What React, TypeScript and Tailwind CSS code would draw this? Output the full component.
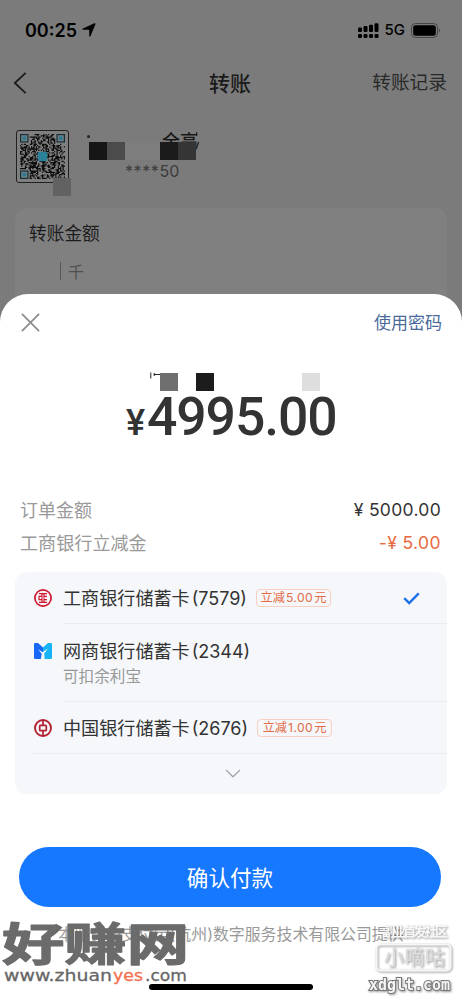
import React from "react";

type BankCard = {
  id: string;
  name: string;
  tail: string;
  discount?: string;
  note?: string;
  selected?: boolean;
  icon: React.ReactNode;
};

function IcbcIcon() {
  return (
    <svg viewBox="0 0 18 18" className="h-[18px] w-[18px]" fill="none" stroke="#cf1930">
      <circle cx="9" cy="9" r="8.1" strokeWidth="1.7" />
      <path d="M5 4.7h8M5 13.3h8" strokeWidth="1.3" />
      <path d="M8 4.7v2.6H5v3.4h3v2.6M10 4.7v2.6h3M10 13.3v-2.6h3M7 9h4" strokeWidth="1.2" />
    </svg>
  );
}

function MybankIcon() {
  return (
    <svg viewBox="0 0 18 16" className="h-4 w-[18px]">
      <path d="M1.2 0H4l5 4.4V16H1.2Q0 16 0 14.8V1.2Q0 0 1.2 0z" fill="#1768f5" />
      <path d="M16.8 0H14L9 4.4V16h7.8q1.2 0 1.2-1.2V1.2Q18 0 16.8 0z" fill="#16b4f7" />
      <path d="M4.2 6.2l4.4 3L13.8 5.6l-3.6 5.2.4 5.2H6.8l1-5z" fill="#f5f7fa" />
    </svg>
  );
}

function BocIcon() {
  return (
    <svg viewBox="0 0 18 18" className="h-[18px] w-[18px]" fill="none" stroke="#b4202f">
      <circle cx="9" cy="9" r="8" strokeWidth="1.9" />
      <rect x="5.7" y="6.3" width="6.6" height="5.4" rx="0.8" strokeWidth="1.7" />
      <path d="M9 1v5.3M9 11.7V17" strokeWidth="1.7" />
    </svg>
  );
}

const cards: BankCard[] = [
  { id: "icbc", name: "工商银行储蓄卡", tail: "(7579)", discount: "5.00", selected: true, icon: <IcbcIcon /> },
  { id: "mybank", name: "网商银行储蓄卡", tail: "(2344)", note: "可扣余利宝", icon: <MybankIcon /> },
  { id: "boc", name: "中国银行储蓄卡", tail: "(2676)", discount: "1.00", icon: <BocIcon /> },
];

// module grid for the receive code, finder corners are left empty
const SIZE = 37;
const modules: string[] = [];
let seed = 20;
for (let y = 0; y < SIZE; y++) {
  for (let x = 0; x < SIZE; x++) {
    seed = (seed * 1103515245 + 12345) % 2147483648;
    const corner = (x < 8 && y < 8) || (x > SIZE - 9 && y < 8) || (x < 8 && y > SIZE - 9);
    if (!corner && (seed >> 12) % 100 < 54) modules.push(`M${x} ${y}h1v1h-1z`);
  }
}

function QrCode() {
  return (
    <div className="h-[53px] w-[53px] rounded-[3px] border border-[#202020] bg-[#7f7f7f] p-[3px]">
      <svg viewBox="0 0 37 37" className="h-full w-full">
        <path d={modules.join("")} fill="#0d0d0d" />
        {[[0, 0], [30, 0], [0, 30]].map(([x, y]) => (
          <g key={`${x}-${y}`}>
            <rect x={x + 0.5} y={y + 0.5} width="6" height="6" fill="none" stroke="#12303b" />
            <rect x={x + 2} y={y + 2} width="3" height="3" fill="#287a93" />
          </g>
        ))}
        <rect x="14.5" y="14.5" width="8" height="8" rx="2" fill="#2b8198" />
      </svg>
    </div>
  );
}

function StatusBar() {
  return (
    <div className="flex h-[60px] items-center justify-between pr-[21px] pl-[25px] text-black">
      <div className="flex items-center gap-[5px]">
        <span className="text-[18px] font-semibold">00:25</span>
        <svg viewBox="0 0 14 14" className="h-[14px] w-[14px]">
          <path d="M12.4.3q1.5-.4 1 1L8.5 13.1q-.8 1.2-1.3-.2V7.3q0-.5-.5-.5H1.1q-1.5-.4-.2-1.3z" />
        </svg>
      </div>
      <div className="flex items-center">
        <svg viewBox="0 0 21 15" className="h-[15px] w-[21px]">
          {[0, 1, 2, 3].map((i) => (
            <g key={i}>
              <rect x={i * 5.5} y={4.5 - i * 1.4} width="4" height={4.5 + i * 1.4} rx="1.2" />
              <rect x={i * 5.5} y="11" width="4" height="4" rx="1.2" />
            </g>
          ))}
        </svg>
        <span className="ml-[6px] text-[15px] font-medium">5G</span>
        <svg viewBox="0 0 30 15" className="ml-[6px] h-[15px] w-[30px]">
          <rect x="0.5" y="0.5" width="26" height="14" rx="4" fill="none" stroke="#474747" />
          <rect x="2.2" y="2.2" width="22.6" height="10.6" rx="2.5" />
          <path d="M28 5.3q2 2.2 0 4.4z" fill="#474747" />
        </svg>
      </div>
    </div>
  );
}

function TransferPage() {
  return (
    <div className="flex h-[340px] flex-col">
      <StatusBar />
      <div className="grid h-[46px] grid-cols-3 items-center pr-[15px] pl-[13px] text-[#1b1b1b]">
        <svg viewBox="0 0 14 22" className="h-[22px] w-[14px]" fill="none" stroke="currentColor" strokeWidth="1.8">
          <path d="M12.7.8 1.8 11l10.9 10.2" />
        </svg>
        <h1 className="pt-px text-center text-[21px] font-medium">转账</h1>
        <span className="pt-px text-right text-[18.7px] text-[#292929]">转账记录</span>
      </div>
      <div className="flex h-[102px] pt-6 pl-4">
        <div className="relative">
          <QrCode />
          <div className="absolute top-[48px] left-[37px] h-[18px] w-[18px] bg-[#626262]" />
        </div>
        <div className="ml-[16px] w-[120px]">
          <div className="flex h-3 justify-between pl-[2px]">
            <div className="mt-[5px] h-[3px] w-[3px] rounded-full bg-[#222]" />
            <div className="mr-[7px] text-[18px] leading-[23px] font-medium whitespace-nowrap text-[#171717]">
              全高
            </div>
          </div>
          {/* mosaic over the payee name */}
          <div className="relative ml-[4px] flex h-[18px]">
            <div className="w-[18px] bg-[#161616]" />
            <div className="w-[18px] bg-[#4b4b4b]" />
            <div className="w-[35px] bg-[#7d7d7d]" />
            <div className="w-[18px] bg-[#1b1b1b]" />
            <div className="w-[18px] bg-[#353535]" />
            <svg viewBox="0 0 4 28" className="-mt-[10px] h-7 w-1" fill="none" stroke="#222">
              <path d="M.2 0q1 2 .2 4M2.6 10 .3 17" strokeWidth="1.3" />
            </svg>
          </div>
          <div className="flex items-center pl-[40px] text-[16px] leading-[23px] text-[#3c3c3c]">
            <span className="tracking-[0.6px]">****</span>
            <span>50</span>
          </div>
        </div>
      </div>
      <div className="mx-[15px] flex-1 rounded-t-xl bg-[#808080] pt-3 pl-[14px]">
        <div className="text-[17.7px] leading-7 text-[#1d1d1d]">转账金额</div>
        <div className="mt-[13px] flex h-5 items-center pl-[31px] text-[16px] text-[#505050]">
          <div className="mr-[7px] h-[18px] w-px bg-[#555]" />
          <span className="pt-[2px]">千</span>
        </div>
      </div>
    </div>
  );
}

function CardRow({ card }: { card: BankCard }) {
  return (
    <div className={card.note ? "flex h-[78px] pt-[13px]" : "flex h-[52px] pt-3"}>
      <div className="flex h-7 w-[48px] shrink-0 items-center pl-[19px]">{card.icon}</div>
      <div className="flex-1">
        <div className="flex h-7 items-center">
          <span className="pt-px text-[18.1px] whitespace-nowrap text-[#333]">
            {card.name}
            <span className="ml-[2px] text-[18px]">{card.tail}</span>
          </span>
          {card.discount && (
            <span className="ml-[9px] flex h-[18px] w-[75px] items-center justify-center rounded border border-[#f8cfc0] text-[12.2px] whitespace-nowrap text-[#e46a46]">
              立减<span className="mx-px tracking-[0.4px]">{card.discount}</span>元
            </span>
          )}
          {card.selected && (
            <svg viewBox="0 0 18 14" className="mr-[27px] ml-auto h-[13px] w-[17px]" fill="none" stroke="#1b70ea" strokeWidth="2.6">
              <path d="M1.2 6.7 6.5 12 16.8 1.4" />
            </svg>
          )}
        </div>
        {card.note && <div className="text-[15.6px] leading-6 text-[#999]">{card.note}</div>}
      </div>
    </div>
  );
}

function SiteMark() {
  return (
    <svg className="absolute bottom-3 left-0 h-[70px] w-[192px]" viewBox="0 0 192 70">
      <g transform="scale(1 .76)">
        <text x="2" y="57" textLength="187" lengthAdjust="spacingAndGlyphs" fontSize="60" fontWeight="700" fill="#6b6b6b" stroke="#6b6b6b" strokeWidth="1.6" strokeLinejoin="round">
          好赚网
        </text>
      </g>
      <g fill="#666" stroke="#666" strokeWidth="0.3" fontSize="16.5" className="font-['DejaVu_Sans',sans-serif]">
        <text x="4" y="63" textLength="108" lengthAdjust="spacingAndGlyphs">www.zhuan</text>
        <text x="113" y="63" textLength="30" lengthAdjust="spacingAndGlyphs" fill="#f4704f" stroke="#f4704f">yes</text>
        <text x="145" y="63" textLength="42" lengthAdjust="spacingAndGlyphs">.com</text>
      </g>
    </svg>
  );
}

function ForumMark() {
  return (
    <svg className="absolute right-0 bottom-0 h-[82px] w-[100px] drop-shadow-[1px_1px_1px_rgba(0,0,0,0.4)]" viewBox="0 0 100 82">
      <text x="20" y="18" textLength="66" fontSize="13" fontWeight="700" fill="#f8f8f8">副业首发社区</text>
      <rect x="14.5" y="26.5" width="74" height="26" rx="4" fill="none" stroke="#f6f6f6" strokeWidth="2" />
      <text x="22" y="47" textLength="61" fontSize="20" fontWeight="500" fill="#dcdcdc">小嘀咕</text>
      <text x="7" y="72" textLength="81" lengthAdjust="spacingAndGlyphs" fontSize="16" fontWeight="700" fill="#f5f5f5" stroke="#777" strokeWidth="2" paintOrder="stroke" className="font-['DejaVu_Sans_Mono',monospace]">
        xdglt.com
      </text>
    </svg>
  );
}

function PaySheet() {
  return (
    <div className="absolute inset-x-0 top-[294px] bottom-0 flex flex-col rounded-t-[28px] bg-white">
      <div className="flex h-14 shrink-0 items-center justify-between pr-[20px] pl-[21px]">
        <svg viewBox="0 0 19 19" className="h-[19px] w-[19px]" fill="none" stroke="#8b8b8b" strokeWidth="1.7">
          <path d="M.9.9l17.2 17.2M18.1.9.9 18.1" />
        </svg>
        <span className="pt-[3px] text-[17px] text-[#496a9b]">使用密码</span>
      </div>
      <div className="h-[143px] shrink-0 pt-[21px]">
        <div className="ml-[150px] flex h-[20px] items-end">
          <svg viewBox="0 0 10 20" className="h-5 w-[10px]" fill="none" stroke="#222">
            <path d="M.8 1.5v6M4.2 2v3M4 3.5h6" />
          </svg>
          <div className="h-[18px] w-[18px] bg-[#6f6f6f]" />
          <div className="ml-[18px] h-[18px] w-[18px] bg-[#1c1c1c]" />
          <div className="ml-[88px] h-[18px] w-[18px] bg-[#dedede]" />
        </div>
        <div className="flex items-baseline pt-px pl-[126px] font-['Roboto',sans-serif] font-medium text-[#333]">
          <span className="w-[21px] text-[36px]">¥</span>
          <span className="text-[53.5px] leading-[50px] tracking-[-1.1px]">4995.00</span>
        </div>
      </div>
      <div className="flex h-[33px] shrink-0 items-center justify-between pt-[2px] pr-[21px] pl-5 text-[18px]">
        <span className="text-[#999]">订单金额</span>
        <span className="text-[17.5px] tracking-[0.3px] text-[#333]">¥ 5000.00</span>
      </div>
      <div className="flex h-[33px] shrink-0 items-center justify-between pt-[2px] pr-[21px] pl-5 text-[18.1px]">
        <span className="text-[#999]">工商银行立减金</span>
        <span className="text-[17.5px] tracking-[0.4px] text-[#e86a42]">-¥ 5.00</span>
      </div>
      <div className="mx-[15px] mt-[13px] h-[222px] shrink-0 rounded-xl bg-[#f5f7fa]">
        {cards.map((card, i) => (
          <React.Fragment key={card.id}>
            {i > 0 && <div className="-mt-px ml-[49px] h-px bg-[#eaecef]" />}
            <CardRow card={card} />
          </React.Fragment>
        ))}
        <div className="-mt-px ml-[17px] h-px bg-[#eaecef]" />
        <svg viewBox="0 0 16 9" className="mt-[15px] ml-[210px] h-[9px] w-4" fill="none" stroke="#a1a3a6" strokeWidth="1.2">
          <path d="M1 1l7 6.8L15 1" />
        </svg>
      </div>
      <button className="mr-[21px] ml-[19px] mt-[53px] h-[60px] shrink-0 rounded-full bg-[#1677ff] pt-[2px] text-[21.6px] text-white">
        确认付款
      </button>
      <p className="mt-4 text-center text-[15.9px] leading-6 whitespace-nowrap text-[#999]">
        本服务由支付宝(杭州)数字服务技术有限公司提供
      </p>
      <div className="absolute bottom-[10px] left-[149px] h-[6px] w-[164px] rounded-full bg-black" />
      <SiteMark />
      <ForumMark />
    </div>
  );
}

export default function App() {
  return (
    <div className="relative h-[1000px] w-full overflow-hidden bg-[#7b7b7b] font-['Inter','Noto_Sans_CJK_SC',sans-serif]">
      <TransferPage />
      <PaySheet />
    </div>
  );
}
